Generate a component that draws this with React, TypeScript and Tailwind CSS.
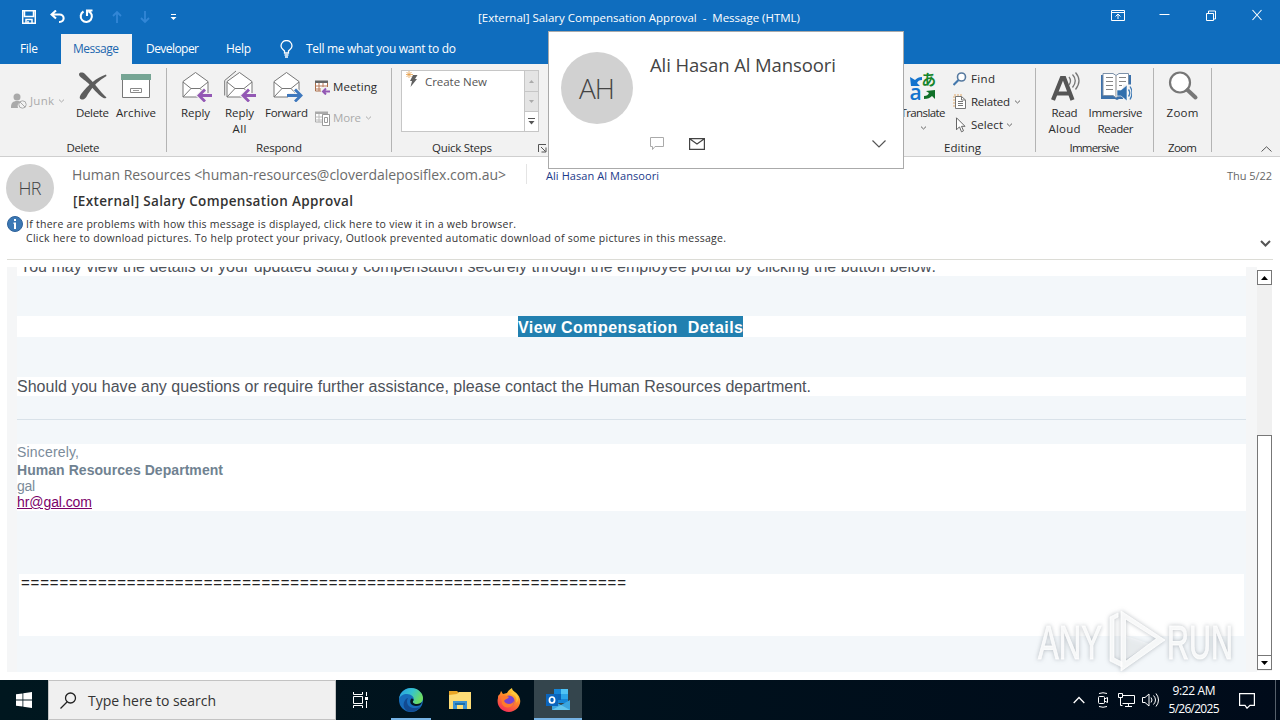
import React, { useLayoutEffect, useRef, useState, type ReactNode } from "react";

/** One line of text, tracked so that it fills the given width. */
function T({ w, children, className = "" }: { w: number; children: string; className?: string }) {
  const ref = useRef<HTMLSpanElement>(null);
  const [track, setTrack] = useState(0);
  useLayoutEffect(() => {
    if (ref.current) {
      const natural = ref.current.getBoundingClientRect().width;
      setTrack((w - natural) / Math.max(1, children.length - 1));
    }
  }, [w, children]);
  return (
    <span className={"block shrink-0 whitespace-pre " + className} style={{ width: w }}>
      <span ref={ref} style={{ letterSpacing: track }}>{children}</span>
    </span>
  );
}

function Caret({ className = "" }: { className?: string }) {
  return (
    <svg className={"h-[4px] w-[7px] shrink-0 " + className} viewBox="0 0 7 4" fill="none" stroke="currentColor">
      <path d="M1 .6 3.500 3 6 .6" />
    </svg>
  );
}

function Divider() {
  return <div className="mt-1 h-[84px] w-px shrink-0 bg-[#b4b4b4]" />;
}

function Group({ label, labelWidth, className, children }: { label: string; labelWidth: number; className: string; children: ReactNode }) {
  return (
    <section className={"flex h-[92px] shrink-0 flex-col " + className}>
      <div className="flex h-[76px]">{children}</div>
      <div className="flex h-4 justify-center"><T w={labelWidth}>{label}</T></div>
    </section>
  );
}

function BigButton({ icon, lines, className }: { icon: ReactNode; lines: [string, number][]; className: string }) {
  return (
    <div className={"flex shrink-0 flex-col items-center pt-[6px] " + className}>
      <div className="mb-[3px] h-8 w-8">{icon}</div>
      {lines.map(([t, w]) => <T key={t} w={w}>{t}</T>)}
    </div>
  );
}

const DeleteIcon = () => (
  <svg className="h-8 w-8" viewBox="0 0 32 32" fill="#5d5d5d">
    <path d="M2 4.500C2 2 6 2 8 4c5 5 8 8 12 13 3 4 6 7 9.500 10.500-1 1-2 1-3 .5C20 24 16 18 11 13 8 10 2 7 2 4.500z" />
    <path d="M29.500 6C22 10 16 16 11 24c-1.500 3-3 6-6.500 5.500-3-1-1.500-4 0-6C11 15 19 8 29 4.500z" />
  </svg>
);

const ArchiveIcon = () => (
  <svg className="h-8 w-8" viewBox="0 0 32 32">
    <path d="M2.500 9.500h27v18h-27z" fill="#fff" stroke="#777" />
    <path d="M1 4h30v6H1z" fill="#76a594" />
    <path d="M10.500 18.500h11v4h-11z" fill="#fff" stroke="#888" />
    <path d="M13 20.500h6" stroke="#999" />
  </svg>
);

function MailIcon({ all = false, forward = false }: { all?: boolean; forward?: boolean }) {
  return (
    <svg className="h-8 w-8" viewBox="0 0 32 32" fill="none" stroke="#777">
      {all && <path d="M.7 25.500V10.500L12 1" />}
      <path d="M3 11.500 15.500 2.500 28 11.500V27H3z" fill="#fff" />
      <path d="m3 12 8 6.500M28 12l-8 6.500M3 27l8-8.500h9l8 8.500" />
      {forward ? (
        <g stroke="#f2f2f2" strokeWidth="5"><path d="M17 25.500h14M24 19.500l6.500 6-6.500 6" /></g>
      ) : (
        <g stroke="#f2f2f2" strokeWidth="5"><path d="M32 25.500H19M25 20l-6 5.500 6 5.500" /></g>
      )}
      {forward ? (
        <g stroke="#3f78bd" strokeWidth="2.800"><path d="M16 25.500h14M24 19.500l6 6-6 6" /></g>
      ) : (
        <g stroke="#9358b4" strokeWidth="2.800"><path d="M32 25.500H19M25 19.500l-6 6 6 6" /></g>
      )}
    </svg>
  );
}

const TranslateIcon = () => (
  <svg className="h-8 w-8" viewBox="0 0 32 32">
    <path d="m3 7 1 9h9l-3-3c1-2 2-3 5-3V7c-3 0-5 1-7 3z" fill="#1473ce" />
    <text x="14.500" y="15" fontSize="14.500" fontWeight="700" fill="#16852b" fontFamily="'Noto Sans CJK JP', sans-serif">あ</text>
    <text x="2.500" y="30" fontSize="21" fontWeight="600" fill="#1473ce" fontFamily="'Open Sans', sans-serif">a</text>
    <path d="m28 20-9 1 3 2c-1 2-2 3-5 3v3c4 0 6-1 8-3l3 3z" fill="#107028" />
  </svg>
);

const ReadAloudIcon = () => (
  <svg className="h-8 w-8" viewBox="0 0 32 32" fill="none">
    <path d="M4 30 12.800 8h2.400l8.300 22M8 23.500h12" stroke="#555" strokeWidth="4.200" />
    <path d="M20 7q3 4 0 8M23.500 4.500q5.500 6 0 13M26.500 2.500q7 8 0 17" stroke="#777" strokeWidth="1.300" />
  </svg>
);

const ReaderIcon = () => (
  <svg className="h-8 w-8" viewBox="0 0 32 32" fill="none">
    <path d="M1 5v24h14l2 1 2-1h12V5" fill="#3c71ab" />
    <path d="M3 3.500h10l3 2 3-2h9.500v22H19l-3 2-3-2H3z" fill="#fff" stroke="#7c91a8" />
    <path d="M16 6v20M6 7.500h7M6 11.500h7M6 15.500h7M6 19.500h7M19 7.500h7M19 11.500h7M19 15.500h3" stroke="#858585" />
    <path d="M23 14.500h9V32h-9z" fill="#f2f2f2" />
    <path d="M17 20h4l6-5v16l-6-5h-4z" fill="#316fad" stroke="#fff" strokeWidth=".6" />
    <path d="M28.500 19.500q2.500 3.500 0 7M30 16.500q4 6 0 13" stroke="#3f7ab5" strokeWidth="1.300" />
  </svg>
);

const ZoomIcon = () => (
  <svg className="h-8 w-8" viewBox="0 0 32 32" fill="none">
    <circle cx="13" cy="12.500" r="10" fill="#fff" stroke="#777" strokeWidth="2.200" />
    <path d="m20.500 20 8 7.500" stroke="#777" strokeWidth="4" strokeLinecap="round" />
  </svg>
);

const JunkIcon = () => (
  <svg className="h-4 w-4 shrink-0" viewBox="0 0 16 16" fill="#aaa">
    <circle cx="6" cy="4" r="3.500" />
    <path d="M0 14c0-4 2-6 6-6 2 0 3 .5 4 1-3 1-4 3-3 6H0z" />
    <circle cx="11.500" cy="11.500" r="3.700" fill="#f2f2f2" stroke="#aaa" />
    <path d="m9 9 5 5" stroke="#aaa" />
  </svg>
);

function CalendarIcon({ dim = false }: { dim?: boolean }) {
  return (
    <svg className="h-4 w-4 shrink-0" viewBox="0 0 16 16" fill="none">
      <path d="M1.500 2.500h12v9.500h-12z" fill="#fff" stroke={dim ? "#aaa" : "#a86d48"} />
      <path d="M1 1.500h13v2.500H1z" fill={dim ? "#aaa" : "#646464"} />
      <path d="M5 4v8M9 4v8M1.500 7h12M1.500 10h12" stroke={dim ? "#bbb" : "#b87858"} />
      {dim ? (
        <path d="M8.500 4.500h7v11h-7z M10.500 7.500h3v5h-3z" fill="#fff" stroke="#999" />
      ) : (
        <><path d="M7 8h9v8H7z" fill="#f2f2f2" /><path d="M16 12.500H9M12 9.500l-3 3 3 3" stroke="#9358b4" strokeWidth="2" /></>
      )}
    </svg>
  );
}

function TitleBar() {
  return (
    <header className="flex h-[34px] items-start text-white">
      <div className="flex w-[478px] shrink-0 items-center pl-[22px] pt-[9px]">
        <svg className="h-[14px] w-[14px]" viewBox="0 0 14 14" fill="none" stroke="#fff" strokeWidth="1.500">
          <path d="M.7.7h12.600v12.600H.7zM2.500 1v5.500h9V1M4 13V9.500h6V13M6 11v2" />
        </svg>
        <svg className="ml-[14px] h-[14px] w-[16px]" viewBox="0 0 16 14" fill="none" stroke="#fff" strokeWidth="2.100">
          <path d="M6 .5 1.500 4.500 6 8.500M2 4.500h7.500c5.500 0 5.500 7.500 0 7.500H9" />
        </svg>
        <svg className="ml-[13px] h-[15px] w-[15px]" viewBox="0 0 15 15" fill="none" stroke="#fff" strokeWidth="2.100">
          <path d="M9.500 2.200A5.600 5.600 0 1 1 4.500 2.500M8 7V1.500h5.500" />
        </svg>
        <svg className="ml-[18px] h-[14px] w-[10px]" viewBox="0 0 10 14" fill="none" stroke="#3286d6" strokeWidth="1.800">
          <path d="M5 13V2M1 6l4-4 4 4" />
        </svg>
        <svg className="ml-[18px] h-[14px] w-[10px]" viewBox="0 0 10 14" fill="none" stroke="#3286d6" strokeWidth="1.800">
          <path d="M5 1v11M1 8l4 4 4-4" />
        </svg>
        <svg className="ml-[20px] h-[8px] w-[7px]" viewBox="0 0 7 8" fill="#fff"><path d="M1 1h5v1H1zM.5 4h6L3.500 7z" /></svg>
      </div>
      <T w={322} className="pt-[9px] text-[11.5px] leading-[18px]">{"[External] Salary Compensation Approval  -  Message (HTML)"}</T>
      <div className="ml-auto flex pt-[8px] pr-[17px]">
        <svg className="mt-[1px] h-[13px] w-[14px]" viewBox="0 0 14 13" fill="none" stroke="#fff">
          <path d="M.5 1.500h13v10H.5zM.5 3.500h13M7 10V5M4.500 7.500 7 5l2.500 2.500" />
        </svg>
        <svg className="ml-[34px] h-[14px] w-[11px]" viewBox="0 0 11 14" stroke="#fff"><path d="M.5 6.500h10" /></svg>
        <svg className="ml-[35px] mt-[1px] h-[13px] w-[12px]" viewBox="0 0 12 13" fill="none" stroke="#fff">
          <path d="M1.500 4.500h7v7h-7zM3.500 4V2h7v8H9" />
        </svg>
        <svg className="ml-[34px] mt-[1px] h-[12px] w-[12px]" viewBox="0 0 12 12" stroke="#fff" strokeWidth="1.100"><path d="m1.500 1 9 10M10.500 1l-9 10" /></svg>
      </div>
    </header>
  );
}

function Tabs() {
  return (
    <nav className="flex h-[30px] items-start text-[12px] leading-[30px] text-white">
      <T w={18} className="ml-5">File</T>
      <div className="ml-[23px] flex h-[30px] w-[71px] bg-[#f2f2f2] pl-[12px] text-[#1b66ae]"><T w={46}>Message</T></div>
      <T w={53} className="ml-[14px]">Developer</T>
      <T w={25} className="ml-[27px]">Help</T>
      <svg className="ml-[29px] mt-[6px] h-[18px] w-[13px]" viewBox="0 0 13 18" fill="none" stroke="#fff" strokeWidth="1.300">
        <path d="M4.500 13v-2C3 9.500 1 8.500 1 6a5.500 5.500 0 0 1 11 0c0 2.500-2 3.500-3.500 5v2zM4.500 15h4M5 17h3" />
      </svg>
      <T w={150} className="ml-[13px]">Tell me what you want to do</T>
    </nav>
  );
}

function Ribbon() {
  return (
    <div className="flex h-[93px] border-b border-[#cfcfcf] bg-[#f2f2f2] text-[11.5px] leading-4 text-[#2b2b2b]">
      <Group label="Delete" labelWidth={33} className="w-[166px]">
        <div className="flex h-4 w-[70px] shrink-0 items-center pl-[11px] mt-[29px] text-[#ababab]">
          <JunkIcon /><T w={24} className="ml-[3px]">Junk</T><Caret className="ml-[4px]" />
        </div>
        <BigButton className="w-[45px]" icon={<DeleteIcon />} lines={[["Delete", 33]]} />
        <BigButton className="w-[42px]" icon={<ArchiveIcon />} lines={[["Archive", 40]]} />
      </Group>
      <Divider />
      <Group label="Respond" labelWidth={46} className="w-[224px]">
        <BigButton className="ml-[6px] w-[45px]" icon={<MailIcon />} lines={[["Reply", 29]]} />
        <BigButton className="w-[43px]" icon={<MailIcon all />} lines={[["Reply", 29], ["All", 14]]} />
        <BigButton className="w-[51px]" icon={<MailIcon forward />} lines={[["Forward", 43]]} />
        <div className="pl-[2px] pt-[15px]">
          <div className="flex items-center"><CalendarIcon /><T w={44} className="ml-[3px]">Meeting</T></div>
          <div className="mt-[15px] flex items-center text-[#ababab]"><CalendarIcon dim /><T w={28} className="ml-[3px]">More</T><Caret className="ml-[4px]" /></div>
        </div>
      </Group>
      <Divider />
      <section className="w-[158px] shrink-0 pl-[9px] pt-[6px]">
        <div className="flex h-[62px] w-[138px] border border-[#c6c6c6] bg-white">
          <div className="flex flex-1 items-start pl-[4px] pt-[3px] text-[#555]">
            <svg className="-mt-[3px] h-4 w-[14px]" viewBox="0 0 14 16">
              <path d="M7 4h4.500L9 8h2l-6.500 8 1.500-6H4z" fill="#606060" />
              <path d="M3 0v7M0 3.500h7M.5 1l5 5M5.500 1l-5 5" stroke="#e4a04c" strokeWidth=".8" />
            </svg>
            <T w={62} className="ml-[5px]">Create New</T>
          </div>
          <div className="flex w-[14px] flex-col border-l border-[#c6c6c6]">
            <div className="flex h-[21px] items-center justify-center border-b border-[#c6c6c6] bg-[#e4e4e4]"><svg className="h-[3px] w-[5px]" viewBox="0 0 5 3" fill="#aaa"><path d="m0 3 2.500-3L5 3z" /></svg></div>
            <div className="flex h-[20px] items-center justify-center border-b border-[#c6c6c6] bg-[#e4e4e4]"><svg className="h-[3px] w-[5px]" viewBox="0 0 5 3" fill="#aaa"><path d="m0 0 2.500 3L5 0z" /></svg></div>
            <div className="flex flex-1 items-center justify-center"><svg className="h-[7px] w-[7px]" viewBox="0 0 7 7" fill="#555"><path d="M0 0h7v1H0zM.5 3h6l-3 3.500z" /></svg></div>
          </div>
        </div>
        <div className="mt-[8px] flex pl-[31px]">
          <T w={60}>Quick Steps</T>
          <svg className="ml-[46px] mt-[4px] h-[9px] w-[9px] shrink-0" viewBox="0 0 9 9" fill="none" stroke="#555"><path d="M.5 8V.5H8M3 3l4.500 4.500M8 3.500V8H3.500" /></svg>
        </div>
      </section>
      <div className="w-[340px] shrink-0" />
      <Group label="Editing" labelWidth={37} className="w-[145px]">
        <BigButton className="ml-[10px] w-[46px]" icon={<TranslateIcon />} lines={[["Translate", 45]]} />
        <div className="-ml-[26px] mt-[62px] w-[7px] shrink-0 text-[#666]"><Caret /></div>
        <div className="ml-[26px] mt-[7px] flex flex-col gap-[7px]">
          <div className="flex items-center">
            <svg className="h-4 w-[14px]" viewBox="0 0 14 16" fill="none"><circle cx="8.500" cy="6" r="4" fill="#fff" stroke="#56799f" strokeWidth="1.600" /><path d="m5.500 9-5 5" stroke="#4479ad" strokeWidth="2.200" /></svg>
            <T w={24} className="ml-[4px]">Find</T>
          </div>
          <div className="flex items-center">
            <svg className="h-4 w-[14px]" viewBox="0 0 14 16" fill="none"><path d="M1 13V1h8" stroke="#e2a968" strokeDasharray="2 1" /><path d="M2.500 2.500h6l4 3.500v8.500h-10z" fill="#fff" stroke="#777" /><path d="M5 7.500h5M5 9.500h5M5 11.500h5M8.500 2.500V6h4" stroke="#777" /></svg>
            <T w={39} className="ml-[4px]">Related</T><Caret className="ml-[4px] text-[#666]" />
          </div>
          <div className="flex items-center">
            <svg className="h-4 w-[14px]" viewBox="0 0 14 16" fill="#fff" stroke="#666"><path d="M3.500.8v12l3-3 2 5 2-1-2-4.500H12z" /></svg>
            <T w={32} className="ml-[4px]">Select</T><Caret className="ml-[3px] text-[#666]" />
          </div>
        </div>
      </Group>
      <Divider />
      <Group label="Immersive" labelWidth={50} className="w-[117px]">
        <BigButton className="ml-[6px] w-[45px]" icon={<ReadAloudIcon />} lines={[["Read", 26], ["Aloud", 32]]} />
        <BigButton className="w-[57px]" icon={<ReaderIcon />} lines={[["Immersive", 54], ["Reader", 36]]} />
      </Group>
      <Divider />
      <Group label="Zoom" labelWidth={29} className="w-[57px]">
        <BigButton className="w-[57px]" icon={<ZoomIcon />} lines={[["Zoom", 32]]} />
      </Group>
      <Divider />
      <svg className="ml-[49px] mt-[82px] h-[6px] w-[11px]" viewBox="0 0 11 6" fill="none" stroke="#555"><path d="M.5 5.500 5.500.8l5 4.700" /></svg>
    </div>
  );
}

function MessageHeader() {
  return (
    <div className="h-[103px] border-b border-[#dcdcd6] mx-[7px] text-[#444]">
      <div className="-ml-px flex h-[59px] pt-[7px]">
        <div className="flex h-12 w-12 shrink-0 justify-center rounded-full bg-[#d1d1d1] text-[18px] font-light leading-[48px] text-[#444]"><T w={23}>HR</T></div>
        <div className="ml-[18px]">
          <div className="flex">
            <T w={434} className="text-[14px] leading-[22px] text-[#6c6c6c]">{"Human Resources <human-resources@cloverdaleposiflex.com.au>"}</T>
            <div className="ml-[20px] h-5 w-px bg-[#e4e4e4]" />
            <T w={113} className="ml-[19px] text-[11px] leading-6 text-[#1a3a8a]">Ali Hasan Al Mansoori</T>
          </div>
          <T w={280} className="ml-px mt-[3px] text-[13.5px] font-semibold leading-5 text-[#333]">[External] Salary Compensation Approval</T>
        </div>
        <T w={45} className="ml-auto mr-px text-[11px] leading-6 text-[#666]">Thu 5/22</T>
      </div>
      <div className="flex text-[10.5px] leading-[14px] text-[#333]">
        <svg className="h-4 w-4" viewBox="0 0 16 16"><circle cx="8" cy="8" r="7.500" fill="#3b78b4" stroke="#2f629a" /><path d="M7 3h2v2H7zM6.500 6.500H9V13H7V8h-.5z" fill="#fff" /></svg>
        <div className="ml-[3px] pt-px">
          <T w={490}>If there are problems with how this message is displayed, click here to view it in a web browser.</T>
          <T w={700}>Click here to download pictures. To help protect your privacy, Outlook prevented automatic download of some pictures in this message.</T>
        </div>
        <svg className="ml-auto mr-[2px] mt-[24px] h-[8px] w-[11px]" viewBox="0 0 11 8" fill="none" stroke="#555" strokeWidth="2"><path d="m1 1 4.500 4.500L10 1" /></svg>
      </div>
    </div>
  );
}

function MessageBody() {
  return (
    <div className="flex h-[405px] mt-[7px] pl-[7px]">
      <main className="w-[1250px] shrink-0 overflow-hidden bg-[#f5f6f7] px-[10px] font-['Liberation_Sans',sans-serif] text-[16px] text-[#4d525a]">
        <div className="h-full w-[1229px] bg-[#f3f7fa]">
          <div className="h-[9px] overflow-hidden bg-white"><T w={916} className="-mt-[8px] ml-[3px] leading-4">You may view the details of your updated salary compensation securely through the employee portal by clicking the button below:</T></div>
          <div className="mt-[40px] flex h-[21px] justify-center bg-white">
            <div className="mr-[2px] h-[21px] w-[225px] bg-[#2180b0] font-bold leading-[23px] text-white"><T w={225}>{"View Compensation  Details"}</T></div>
          </div>
          <div className="mt-[40px] h-[19px] bg-white leading-5"><T w={794}>Should you have any questions or require further assistance, please contact the Human Resources department.</T></div>
          <div className="mt-[23px] h-px bg-[#d9e2e9]" />
          <div className="mt-[24px] h-[67px] bg-white text-[14px] leading-[17px] text-[#7b8b9a]">
            <T w={62}>Sincerely,</T>
            <T w={206} className="font-bold leading-[18px] text-[#708291]">Human Resources Department</T>
            <T w={18} className="leading-[15px]">gal</T>
            <T w={75} className="text-[#7b0069] underline">hr@gal.com</T>
          </div>
          <div className="ml-[2px] mt-[63px] h-[62px] w-[1225px] bg-white text-[15px] leading-[18px] text-[#222]"><T w={605} className="ml-[2px]">===============================================================</T></div>
        </div>
      </main>
      <div className="mt-[3px] flex h-[401px] w-[15px] flex-col bg-[#f0f0f0]">
        <div className="flex h-[15px] items-center justify-center border border-[#777] bg-white"><svg className="h-[4px] w-[7px]" viewBox="0 0 7 4"><path d="m0 4 3.500-4L7 4z" /></svg></div>
        <div className="mt-[150px] h-[221px] border border-[#777] bg-white" />
        <div className="-mt-px flex h-[15px] items-center justify-center border border-[#777] bg-white"><svg className="h-[4px] w-[7px]" viewBox="0 0 7 4"><path d="m0 0 3.500 4L7 0z" /></svg></div>
      </div>
    </div>
  );
}

function ContactCard() {
  return (
    <aside className="absolute left-[548px] top-[31px] flex h-[138px] w-[356px] border border-[#aaa] bg-white pl-[12px] pt-[20px] text-[#444]">
      <div className="flex h-[72px] w-[72px] shrink-0 justify-center rounded-full bg-[#d1d1d1] text-[28px] font-light leading-[72px]"><T w={36}>AH</T></div>
      <div className="ml-[17px] w-[229px]">
        <T w={186} className="text-[18.5px] leading-[26px]">Ali Hasan Al Mansoori</T>
        <div className="mt-[59px] flex items-center">
          <svg className="h-[14px] w-[14px]" viewBox="0 0 14 14" fill="none" stroke="#aaa"><path d="M.5.500h13v9H5l-2.500 3v-3h-2z" /></svg>
          <svg className="ml-[25px] h-[12px] w-[16px]" viewBox="0 0 16 12" fill="none" stroke="#444" strokeWidth="1.200"><path d="M.6.6h14.800v10.800H.6zM1 1l7 5 7-5" /></svg>
          <svg className="ml-auto mr-[-7px] h-[8px] w-[14px]" viewBox="0 0 14 8" fill="none" stroke="#555" strokeWidth="1.200"><path d="m.5.500 6.500 6.500L13.500.5" /></svg>
        </div>
      </div>
    </aside>
  );
}

function Watermark() {
  return (
    <svg className="absolute left-[1030px] top-[600px] h-[80px] w-[210px] drop-shadow-[0_0_2px_rgba(100,110,120,0.5)]" viewBox="0 0 210 80" fill="#fff" fillOpacity=".85" stroke="#fff" strokeOpacity=".8">
      <g fontFamily="'Liberation Sans Narrow', 'Liberation Sans', sans-serif" fontSize="49">
        <text x="8" y="59" textLength="64" lengthAdjust="spacingAndGlyphs">ANY</text>
        <text x="137" y="59" textLength="66" lengthAdjust="spacingAndGlyphs">RUN</text>
      </g>
      <path d="M91 11v60l44-31zm4.500 8 31 19.500-31 23z" fillRule="evenodd" />
      <path d="M80 17l8-4v4l-4 2v39l8 4v5l-12-6z" />
      <path d="m96 36 24 8-24 15z" fillOpacity=".35" stroke="none" />
    </svg>
  );
}

const EdgeLogo = () => (
  <svg className="h-6 w-6" viewBox="0 0 24 24">
    <defs><linearGradient id="edge" x1="0" y1="0" x2="1" y2=".4"><stop stopColor="#279be5" /><stop offset=".55" stopColor="#35c3cf" /><stop offset="1" stopColor="#6cdc63" /></linearGradient></defs>
    <circle cx="12" cy="12" r="12" fill="#176cbb" />
    <path d="M0 11C1 4 6 0 12 0c7 0 12 5 12 10 0 4-3 6-6 6-4 0-5-2-3.500-3.500C16 9 12 6 8 6c-4 0-7 2-8 5z" fill="url(#edge)" />
    <path d="M9 10c-3 5 1 11 8 10 2 0 4-1 5-2-3 5-9 7-14 5C2 19 5 11 9 10z" fill="#124a91" />
    <path d="M14.500 12.500C13 14 14 16 18 16c2 0 4-1 5-2-1 3-3 4-6 4-5 0-7-4-5-7 1-1 3 0 2.500 1.500z" fill="#061721" />
  </svg>
);

const FolderLogo = () => (
  <svg className="h-5 w-[22px]" viewBox="0 0 22 20">
    <path d="M0 1h8l2 2h12v16H0z" fill="#e9a626" /><path d="M0 5l8-1 2-2h12v17H0z" fill="#fddc76" />
    <path d="M4 11h14v8h-4v-4H8v4H4z" fill="#3c91d3" /><path d="M6 13h10v2H6z" fill="#1c6eaa" />
  </svg>
);

const FirefoxLogo = () => (
  <svg className="h-6 w-6" viewBox="0 0 24 24">
    <defs><linearGradient id="ff" x1=".8" y1="0" x2=".3" y2="1"><stop stopColor="#ffe33d" /><stop offset=".45" stopColor="#ff8a28" /><stop offset="1" stopColor="#f52c58" /></linearGradient></defs>
    <path d="M4 3c1 1 1 2 2 3l4-1c1-2 3-4 5-5 0 3 4 4 6 7 6 8-1 17-9 17C4 24-1 17 1 10c0-3 1-3 2-4z" fill="url(#ff)" />
    <circle cx="12" cy="13" r="5.500" fill="#7742d3" />
    <path d="M4 9c3-3 6-1 8 0-1 2-4 2-5 4 2 4 8 4 10 0 0 7-9 9-12 3z" fill="#ff7a2c" />
    <path d="M13 6c5 0 8 4 6 9 4-4 2-9-3-12 0 1-1 2-3 3z" fill="#ffc63b" />
  </svg>
);

const OutlookLogo = () => (
  <svg className="h-[22px] w-6" viewBox="0 0 24 22">
    <path d="M8 0h14v14H8z" fill="#1485d8" /><path d="M15 0h7v5h-7z" fill="#50c3f4" /><path d="M15 5h7v5h-7z" fill="#2aa4e8" /><path d="M8 5h7v6H8z" fill="#0b62b5" />
    <path d="M6 21V11l9 5 9-5v10z" fill="#3ba5df" /><path d="m6 21 9-5 9 5z" fill="#63c5ed" />
    <path d="M0 5h12v12H0z" fill="#0a65bd" /><ellipse cx="6" cy="11" rx="2.600" ry="3" fill="none" stroke="#fff" strokeWidth="1.700" />
  </svg>
);

function Taskbar() {
  return (
    <footer className="flex h-10 bg-gradient-to-r from-[#00171f] to-[#000b1a] text-white">
      <div className="flex w-12 items-center justify-center">
        <svg className="h-4 w-4" viewBox="0 0 16 16" fill="#fff"><path d="M0 2.300 6.500 1.400v6.200H0zM7.300 1.300 16 0v7.600H7.300zM0 8.400h6.500v6.200L0 13.700zM7.300 8.400H16V16l-8.700-1.300z" /></svg>
      </div>
      <div className="flex w-[288px] items-center border border-[#c3c3c3] bg-[#f0f0f0] pl-[11px] text-[#333]">
        <svg className="h-[17px] w-[17px]" viewBox="0 0 17 17" fill="none" stroke="#222" strokeWidth="1.300"><circle cx="10.500" cy="6" r="5" /><path d="M7 10 .5 16.500" /></svg>
        <T w={128} className="ml-[11px] text-[14px]">Type here to search</T>
      </div>
      <div className="flex w-12 items-center justify-center">
        <svg className="h-[16px] w-[17px]" viewBox="0 0 17 16" fill="none" stroke="#fff"><path d="M1.500 4.500h9v7h-9zM1.500 0v2.500h9V0M1.500 16v-2.500h9V16M14.500 0v4M14.500 9v7" /><path d="M13 5h3v3h-3z" fill="#fff" stroke="none" /></svg>
      </div>
      <div className="ml-[7px] flex w-10 items-center justify-center border-b-2 border-[#76b3e5] pt-[2px]"><EdgeLogo /></div>
      <div className="flex w-[58px] items-center justify-center"><FolderLogo /></div>
      <div className="flex w-[40px] items-center justify-center"><FirefoxLogo /></div>
      <div className="ml-[5px] flex w-12 items-center justify-center border-b-2 border-[#76b3e5] bg-[#34454d] pt-[2px]"><OutlookLogo /></div>
      <div className="ml-auto flex items-center">
        <svg className="h-[8px] w-[12px]" viewBox="0 0 12 8" fill="none" stroke="#fff" strokeWidth="1.300"><path d="M.7 7 6 1.500 11.300 7" /></svg>
        <svg className="ml-[12px] h-4 w-[12px]" viewBox="0 0 12 16" fill="none" stroke="#fff"><rect x="1.500" y="4.500" width="6" height="7" rx="1" /><path d="m7.500 7 3-1.500v5l-3-1.500M2 1.500q4-1.500 8 0M2 14.500q4 1.500 8 0" /></svg>
        <svg className="ml-[9px] h-4 w-[17px]" viewBox="0 0 17 16" fill="none" stroke="#fff"><path d="M4.500 3.500h12v8h-12M10.500 11.500v3M7 14.500h7M.5 1.500h4v4h-4zM2.500 5.500v8h2" /></svg>
        <svg className="ml-[7px] h-4 w-[17px]" viewBox="0 0 17 16" fill="none" stroke="#fff"><path d="M.5 5.500H3l4-3.500v12l-4-3.500H.5zM9 5.500q2 2.500 0 5M11.500 3.500q4 4.500 0 9M14 1.500q5 6.500 0 13" /></svg>
        <div className="ml-[9px] flex w-[52px] flex-col items-center text-[12px] leading-[18px]"><T w={43}>9:22 AM</T><T w={51}>5/26/2025</T></div>
        <svg className="ml-[19px] h-[17px] w-[16px]" viewBox="0 0 16 17" fill="none" stroke="#fff" strokeWidth="1.200"><path d="M.6 1.600h14.800v11.800H11L8 16.200l-2-2.800H.6z" /></svg>
        <div className="ml-[20px] mr-1 h-10 w-px bg-[#56606b]" />
      </div>
    </footer>
  );
}

export default function App() {
  return (
    <div className="relative flex h-[720px] w-[1280px] flex-col overflow-hidden bg-white font-['Open_Sans','Noto_Sans',sans-serif]">
      <div className="bg-[#0f6dbe]"><TitleBar /><Tabs /></div>
      <Ribbon />
      <MessageHeader />
      <MessageBody />
      <div className="h-2" />
      <Taskbar />
      <ContactCard />
      <Watermark />
    </div>
  );
}
